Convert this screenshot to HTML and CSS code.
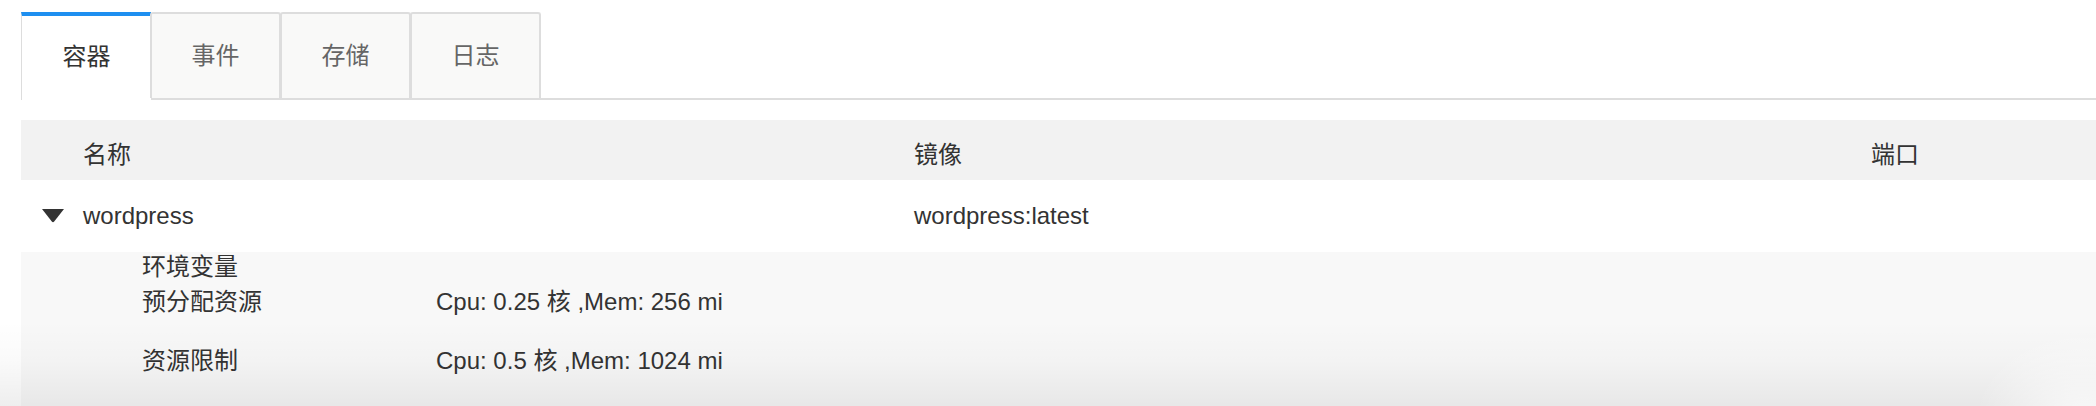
FILE: index.html
```html
<!DOCTYPE html>
<html lang="zh-CN">
<head>
<meta charset="utf-8">
<title>容器</title>
<link rel="stylesheet" href="styles.css">
</head>
<body>
<div class="page">
  <div class="tabs">
    <div class="tab active">容器</div>
    <div class="tab">事件</div>
    <div class="tab">存储</div>
    <div class="tab">日志</div>
  </div>

  <div class="table">
    <div class="row head">
      <div class="cell toggle"></div>
      <div class="cell">名称</div>
      <div class="cell">镜像</div>
      <div class="cell">端口</div>
    </div>
    <div class="row body">
      <div class="cell toggle">
        <svg class="caret" width="24" height="15" viewBox="0 0 24 15" aria-hidden="true">
          <path d="M1 1 H23 L13.2 13.6 Q12 15 10.8 13.6 Z" fill="#333"/>
        </svg>
      </div>
      <div class="cell">wordpress</div>
      <div class="cell">wordpress:latest</div>
      <div class="cell"></div>
    </div>
    <div class="detail">
      <div class="env">环境变量</div>
      <div class="kv first">
        <div class="k">预分配资源</div>
        <div class="v">Cpu: 0.25 核 ,Mem: 256 mi</div>
      </div>
      <div class="kv second">
        <div class="k">资源限制</div>
        <div class="v">Cpu: 0.5 核 ,Mem: 1024 mi</div>
      </div>
    </div>
  </div>
</div>
</body>
</html>
```

FILE: styles.css
```css
html, body {
  margin: 0;
  padding: 0;
  background: #ffffff;
}

body {
  width: 2096px;
  height: 406px;
  overflow: hidden;
  font-family: "Liberation Sans", "Noto Sans CJK SC", sans-serif;
  font-size: 24px;
  color: #333333;
  position: relative;
}

body::after {
  content: "";
  position: absolute;
  left: 0;
  right: 0;
  bottom: 0;
  height: 85px;
  pointer-events: none;
  background:
    radial-gradient(ellipse 110px 90px at 2085px 100px, rgba(255,255,255,0.75), rgba(255,255,255,0) 100%),
    linear-gradient(to bottom, rgba(0,0,0,0) 0%, rgba(0,0,0,0.02) 45%, rgba(0,0,0,0.065) 100%);
}

.page {
  padding: 12px 0 0 21px;
}

/* tabs */
.tabs {
  display: flex;
  border-bottom: 2px solid #dddddd;
  height: 86px;
}

.tab {
  box-sizing: border-box;
  width: 131px;
  height: 86px;
  display: flex;
  align-items: center;
  justify-content: center;
  background: #f9f9f8;
  color: #666666;
  border: 2px solid #dddddd;
  border-bottom: none;
  border-radius: 3px 3px 0 0;
  margin-left: -1px;
  padding-bottom: 5px;
}

.tab:first-child {
  margin-left: 0;
}

.tab.active {
  position: relative;
  z-index: 1;
  height: 88px;
  margin-bottom: -2px;
  background: #ffffff;
  color: #333333;
  border-top: 4px solid #1e8ff0;
  border-left: 1px solid #dddddd;
  border-right: none;
  border-radius: 0;
  padding-bottom: 8px;
  width: 130px;
}

.tab.active + .tab {
  position: relative;
  z-index: 2;
}

/* table */
.table {
  margin-top: 20px;
}

.row {
  display: grid;
  grid-template-columns: 62px 831px 957px 1fr;
  align-items: center;
}

.row.head {
  height: 60px;
  background: #f2f2f2;
  padding-top: 5px;
  box-sizing: border-box;
}

.row.body {
  height: 72px;
  background: #ffffff;
}

.toggle {
  display: flex;
  align-items: center;
  padding-left: 20px;
}

.caret {
  display: block;
  margin-top: -1px;
}

.detail {
  background: #f8f8f8;
  height: 154px;
  padding-left: 121px;
  box-sizing: border-box;
}

.env {
  line-height: 30px;
}

.kv {
  display: grid;
  grid-template-columns: 294px 1fr;
  line-height: 30px;
}

.kv.first {
  margin-top: 5px;
}

.kv.second {
  margin-top: 29px;
}
```
